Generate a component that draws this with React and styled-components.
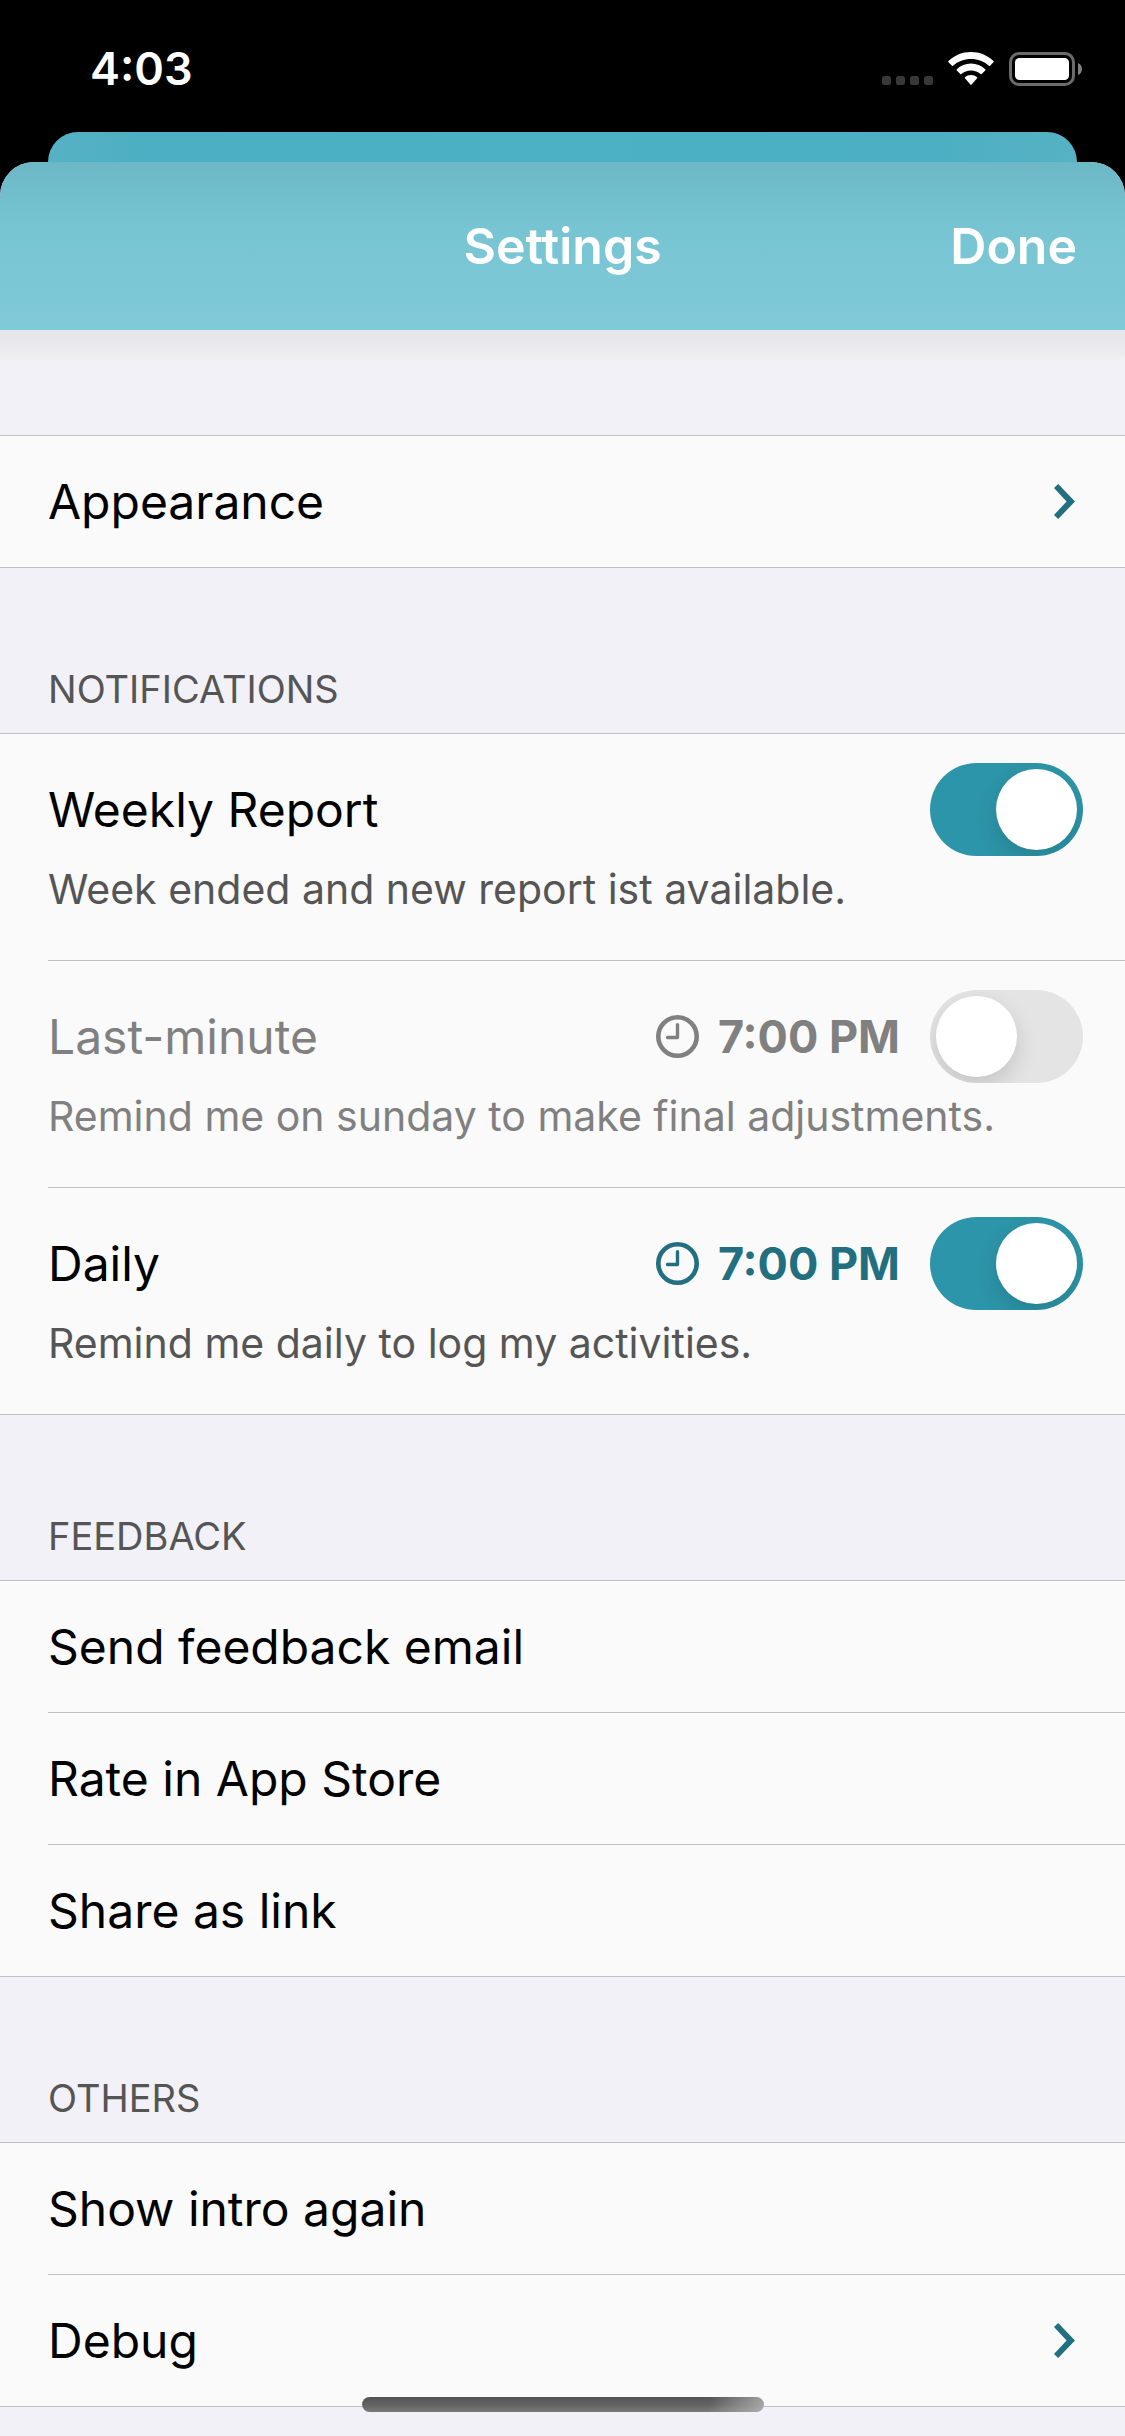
import React, { useState } from "react";
import styled, { createGlobalStyle, css } from "styled-components";

const color = {
  ink: "#000000",
  muted: "#555555",
  disabled: "#808080",
  accent: "#22707f",
  toggle: "#2d95a9",
  toggleOff: "#e4e4e4",
  line: "#bfbfc1",
  row: "#fafafa",
  page: "#f2f1f7",
};

const GlobalStyle = createGlobalStyle`
  * { box-sizing: border-box; }
  body {
    margin: 0;
    background: #000;
    font-family: Inter, "Liberation Sans", sans-serif;
    -webkit-font-smoothing: antialiased;
  }
  button { font: inherit; color: inherit; background: none; border: 0; padding: 0; cursor: pointer; }
`;

const Screen = styled.div`
  display: flex;
  flex-direction: column;
  min-height: 100vh;
`;

const StatusBar = styled.div`
  display: flex;
  align-items: center;
  justify-content: space-between;
  height: 132px;
  padding: 6px 43px 0 90px;
  color: #fff;
`;

const Clock = styled.time`
  font-size: 45px;
  font-weight: 600;
  line-height: 54px;
`;

const StatusIcons = styled.div`
  display: flex;
  align-items: center;
  gap: 15px;
`;

const BackCard = styled.div`
  height: 30px;
  margin: 0 48px;
  border-radius: 30px 30px 0 0;
  background: linear-gradient(90deg, #56b2c4, #4cafc3 10%, #4cb1c5 50%, #4cafc3 85%, #56b2c4);
`;

const Sheet = styled.main`
  flex: 1;
  display: flex;
  flex-direction: column;
  overflow: hidden;
  border-radius: 34px 34px 0 0;
  background: ${color.page};
`;

const NavBar = styled.header`
  display: grid;
  grid-template-columns: 1fr auto 1fr;
  align-items: center;
  height: 168px;
  padding: 0 48px;
  color: #fff;
  background: linear-gradient(#6cb8c6, #77c4d2 40%, #80cad9);
`;

const Title = styled.h1`
  grid-column: 2;
  margin: 0;
  font-size: 50px;
  font-weight: 600;
  line-height: 60px;
`;

const DoneButton = styled.button`
  justify-self: end;
  && {
    font-size: 50px;
    font-weight: 600;
    line-height: 60px;
  }
`;

const Content = styled.div`
  padding-bottom: 30px;
  background: linear-gradient(#e6e5ea, #ecebf0 24px, ${color.page} 32px);
`;

const Section = styled.section`
  padding-top: ${(p) => (p.$first ? "105px" : "0")};
`;

const SectionTitle = styled.h2`
  display: flex;
  align-items: flex-end;
  height: 165px;
  margin: 0;
  padding: 0 48px 21px;
  font-size: 38px;
  font-weight: 400;
  line-height: 46px;
  text-transform: uppercase;
  color: ${color.muted};
`;

const Group = styled.ul`
  list-style: none;
  margin: 0;
  padding: 0 0 0 48px;
  border: solid ${color.line};
  border-width: 1px 0;
  background: ${color.row};
`;

const Item = styled.li`
  & + & {
    border-top: 1px solid ${color.line};
  }
`;

const RowButton = styled.button`
  display: flex;
  align-items: center;
  justify-content: space-between;
  width: 100%;
  height: 131px;
  && {
    padding-right: 50px;
    font-size: 48px;
    line-height: 60px;
    text-align: left;
    color: ${color.ink};
  }
`;

const SwitchRow = styled.div`
  padding: 29px 42px 46px 0;
  color: ${(p) => (p.$on ? color.ink : color.disabled)};
`;

const SwitchLine = styled.div`
  display: flex;
  align-items: center;
  min-height: 93px;
`;

const SwitchLabel = styled.label`
  flex: 1;
  font-size: 48px;
  line-height: 60px;
`;

const TimeButton = styled.button`
  display: flex;
  align-items: center;
  gap: 19px;
  margin-right: 30px;
  && {
    font-size: 45px;
    font-weight: 700;
    line-height: 54px;
    color: ${(p) => (p.$on ? color.accent : color.disabled)};
  }
`;

const Hint = styled.p`
  margin: 8px 0 0;
  font-size: 41px;
  line-height: 50px;
  color: ${(p) => (p.$on ? color.muted : color.disabled)};
`;

const Toggle = styled.input`
  appearance: none;
  display: flex;
  flex: none;
  width: 153px;
  height: 93px;
  margin: 0;
  padding: 6px;
  overflow: hidden;
  border-radius: 47px;
  background: ${color.toggleOff};
  cursor: pointer;

  &::before {
    content: "";
    width: 81px;
    height: 81px;
    border-radius: 50%;
    background: #fff;
    box-shadow: 0 9px 22px rgba(0, 0, 0, 0.14);
  }

  ${(p) =>
    p.checked &&
    css`
      justify-content: flex-end;
      background: ${color.toggle};
    `}
`;

const HomeIndicator = styled.div`
  position: fixed;
  left: 50%;
  bottom: 24px;
  width: 402px;
  height: 15px;
  margin-left: -201px;
  border-radius: 8px;
  background:
    linear-gradient(100deg, transparent 86%, rgba(190, 190, 190, 0.75)),
    linear-gradient(#525252, #626262 50%, #7a7a7a);
`;

const Signal = () => (
  <svg width="51" height="34" viewBox="0 0 51 34" fill="#383838" aria-hidden="true">
    {[0, 14, 28, 42].map((x) => (
      <rect key={x} x={x} y="24" width="9" height="9" rx="2.5" />
    ))}
  </svg>
);

const Wifi = () => (
  <svg width="46" height="34" viewBox="0 0 46 34" fill="#fff" aria-hidden="true">
    <path d="M23 0C31.600 0 39.600 3.300 45.500 9.100Q46 9.700 45.500 10.200L42 13.700Q41.500 14.200 40.900 13.700C36.100 9.300 29.800 7 23 7S9.900 9.300 5.100 13.700Q4.500 14.200 4 13.700L.5 10.200Q0 9.700.5 9.100C6.400 3.300 14.400 0 23 0Z" />
    <path d="M23 11.600C28.500 11.600 33.500 13.700 37.200 17.300Q37.800 17.900 37.200 18.400L33.700 22Q33.200 22.500 32.600 22C30 19.700 26.700 18.400 23 18.400S16 19.700 13.400 22Q12.800 22.500 12.300 22L8.800 18.400Q8.200 17.900 8.800 17.300C12.500 13.700 17.500 11.600 23 11.600Z" />
    <path d="M23 23C25.300 23 27.300 23.800 29 25.200Q29.600 25.800 29.100 26.300L23.600 32.600Q23 33.200 22.400 32.600L16.900 26.300Q16.400 25.800 17 25.200C18.700 23.800 20.700 23 23 23Z" />
  </svg>
);

const Battery = () => (
  <svg width="73" height="34" viewBox="0 0 73 34" aria-hidden="true">
    <rect x="1.500" y="1.500" width="63" height="31" rx="8.500" fill="none" stroke="#6b6b6b" strokeWidth="3" />
    <rect x="6" y="6" width="54" height="22" rx="4.500" fill="#fff" />
    <path d="M69 11C71.500 11.800 73 14.200 73 17S71.500 22.200 69 23Z" fill="#808080" />
  </svg>
);

const ClockIcon = () => (
  <svg width="43" height="43" viewBox="0 0 43 43" fill="none" stroke="currentColor" aria-hidden="true">
    <circle cx="21.500" cy="21.500" r="19.200" strokeWidth="4.600" />
    <path d="M21.500 9.600V22.500H11.500" strokeWidth="3.400" strokeLinecap="round" strokeLinejoin="round" />
  </svg>
);

const Chevron = () => (
  <svg width="21" height="35" viewBox="0 0 21 35" fill={color.accent} aria-hidden="true">
    <path d="M4.200 0L21 17.500L4.200 35L0 31L12.600 17.500L0 4Z" />
  </svg>
);

function LinkRow({ label, chevron }) {
  return (
    <Item>
      <RowButton type="button">
        {label}
        {chevron && <Chevron />}
      </RowButton>
    </Item>
  );
}

function ReminderRow({ id, label, hint, time, initial }) {
  const [on, setOn] = useState(initial);
  return (
    <Item>
      <SwitchRow $on={on}>
        <SwitchLine>
          <SwitchLabel htmlFor={id}>{label}</SwitchLabel>
          {time && (
            <TimeButton type="button" $on={on}>
              <ClockIcon />
              {time}
            </TimeButton>
          )}
          <Toggle
            id={id}
            type="checkbox"
            role="switch"
            checked={on}
            onChange={(e) => setOn(e.target.checked)}
          />
        </SwitchLine>
        <Hint $on={on}>{hint}</Hint>
      </SwitchRow>
    </Item>
  );
}

export default function App() {
  return (
    <Screen>
      <GlobalStyle />
      <StatusBar>
        <Clock>4:03</Clock>
        <StatusIcons>
          <Signal />
          <Wifi />
          <Battery />
        </StatusIcons>
      </StatusBar>
      <BackCard />
      <Sheet>
        <NavBar>
          <Title>Settings</Title>
          <DoneButton type="button">Done</DoneButton>
        </NavBar>
        <Content>
          <Section $first>
            <Group>
              <LinkRow label="Appearance" chevron />
            </Group>
          </Section>
          <Section>
            <SectionTitle>Notifications</SectionTitle>
            <Group>
              <ReminderRow
                id="weekly"
                label="Weekly Report"
                hint="Week ended and new report ist available."
                initial={true}
              />
              <ReminderRow
                id="last-minute"
                label="Last-minute"
                hint="Remind me on sunday to make final adjustments."
                time="7:00 PM"
                initial={false}
              />
              <ReminderRow
                id="daily"
                label="Daily"
                hint="Remind me daily to log my activities."
                time="7:00 PM"
                initial={true}
              />
            </Group>
          </Section>
          <Section>
            <SectionTitle>Feedback</SectionTitle>
            <Group>
              <LinkRow label="Send feedback email" />
              <LinkRow label="Rate in App Store" />
              <LinkRow label="Share as link" />
            </Group>
          </Section>
          <Section>
            <SectionTitle>Others</SectionTitle>
            <Group>
              <LinkRow label="Show intro again" />
              <LinkRow label="Debug" chevron />
            </Group>
          </Section>
        </Content>
      </Sheet>
      <HomeIndicator />
    </Screen>
  );
}
